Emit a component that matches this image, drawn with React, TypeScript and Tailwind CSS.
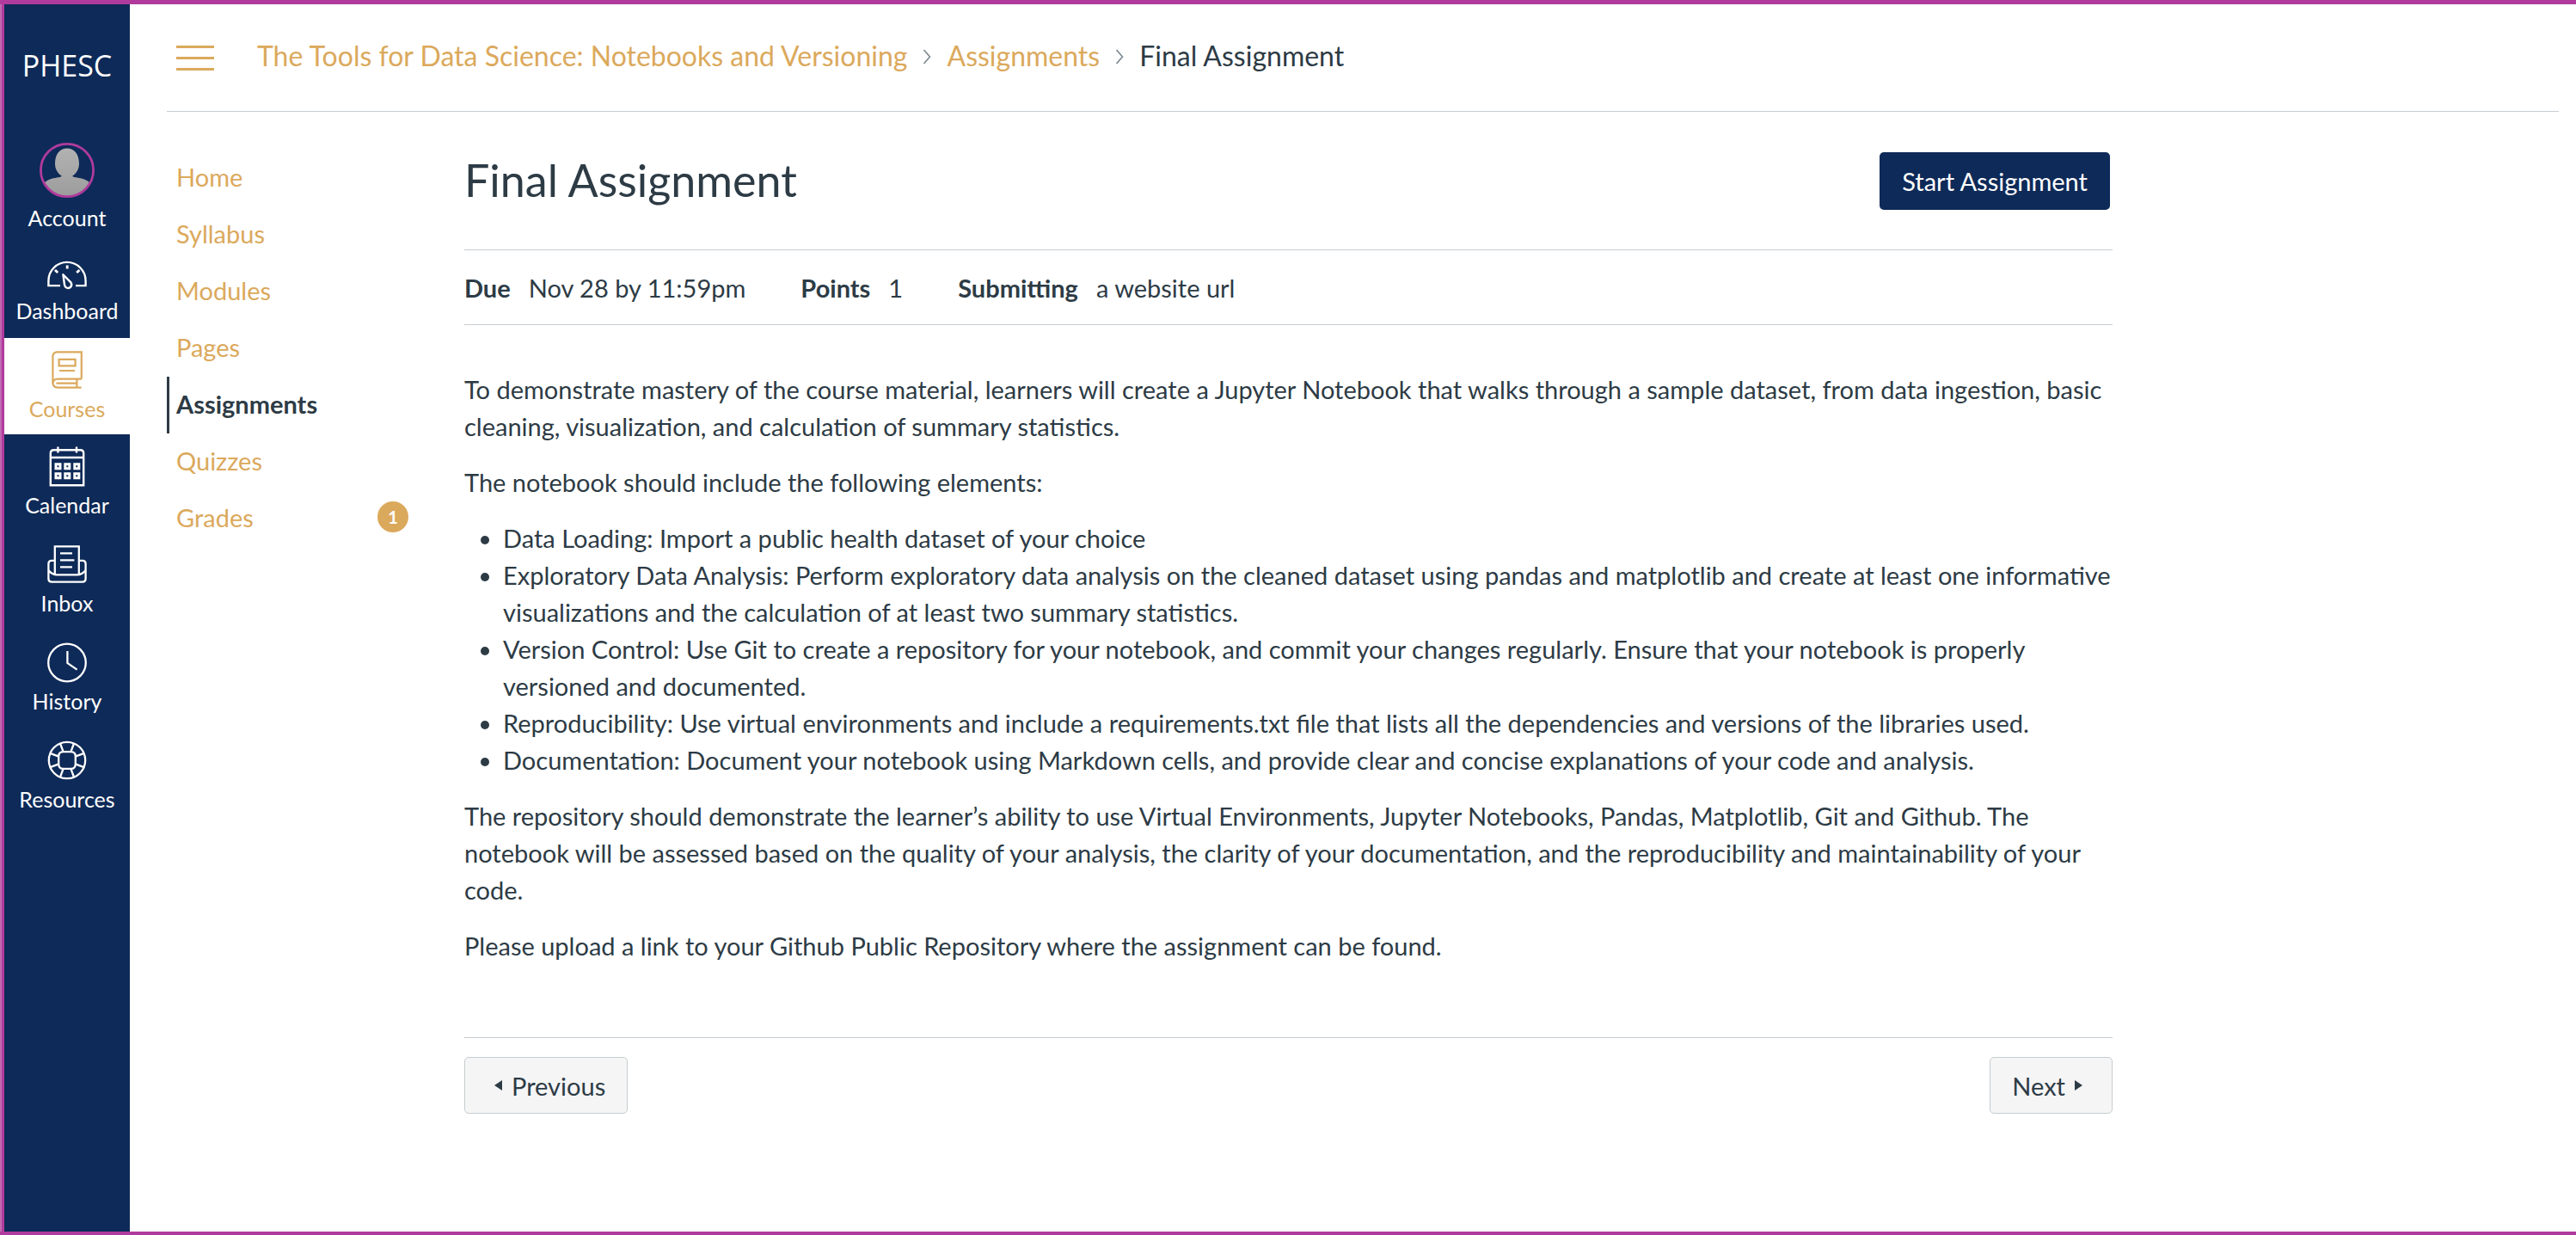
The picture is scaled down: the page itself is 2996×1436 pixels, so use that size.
import type { ReactNode } from 'react';

const Dashboard = () => (
  <svg viewBox="0 0 46 46" className="h-[46px] w-[46px]" fill="none" stroke="currentColor" strokeWidth="2.4">
    <g transform="translate(0 10.5)">
      <path d="M15 28.6H1.4V23A21.6 21.6 0 0 1 44.6 23V28.6H33" />
      <path strokeWidth="2.8" d="M23.2 5v4M9 10.4l3.2 3.2M37.4 10.4l-3.2 3.2" />
      <path d="M18.4 15.8L27.4 24.8Q29.4 28 26.8 30.6Q24 32.6 21.4 30.4Q20.2 29.4 20 27.4Z" strokeLinejoin="round" />
    </g>
  </svg>
);

const Courses = () => (
  <svg viewBox="0 0 36 44" className="h-[44px] w-[36px]" fill="none" stroke="currentColor" strokeWidth="2.2">
    <path d="M34.8 32.6V1.4H6.4Q1.6 1.6 1.4 6.4V37.4Q1.8 42.4 7 42.6H34.6" />
    <path d="M34.8 32.6H7Q1.8 32.8 1.4 37.4" />
    <path d="M8.6 9.8h19v7.6h-19zM9 23h18M5.4 37.6h23M29.4 32.6v10" />
  </svg>
);

const Calendar = () => (
  <svg viewBox="0 0 42 47" className="h-[47px] w-[42px]" fill="none" stroke="currentColor" strokeWidth="2.4">
    <path d="M1.8 45.2V8Q1.8 4.2 5.6 4.2H36.4Q40.2 4.2 40.2 8V45.2Z" />
    <path d="M10.4 0.6v7M32 0.6v7M1.8 13h38.4" />
    <path
      strokeWidth="3"
      d="M8 20.8h5v5H8zM18.8 20.8h5v5h-5zM29.8 20.8h5v5h-5zM8 31.8h5v5H8zM18.8 31.8h5v5h-5zM29.8 31.8h5v5h-5z"
    />
  </svg>
);

const Inbox = () => (
  <svg viewBox="0 0 46 44" className="h-[44px] w-[46px]" fill="none" stroke="currentColor" strokeWidth="2.3">
    <path d="M8.8 34V1.4h28V34" />
    <path d="M8.8 17.8H5Q1.4 17.8 1.4 21.4V39Q1.4 42.6 5 42.6H41Q44.6 42.6 44.6 39V21.4Q44.6 17.8 41 17.8H36.8" />
    <path d="M1.4 29.4Q6.4 34.4 11 34.4H35Q39.6 34.4 44.6 29.4" />
    <path d="M15 9.4h14M15 17.4h16.4M15 25.4h14" />
  </svg>
);

const History = () => (
  <svg viewBox="0 0 46 47" className="h-[47px] w-[46px]" fill="none" stroke="currentColor" strokeWidth="2.3">
    <circle cx="23" cy="23.5" r="21.8" />
    <path d="M23.4 10v14l11.2 7.6" />
  </svg>
);

const Resources = () => (
  <svg viewBox="0 0 46 46" className="h-[46px] w-[46px]" fill="none" stroke="currentColor" strokeWidth="2.3">
    <circle cx="23" cy="23" r="21.2" />
    <path d="M18.6 13.2h8.8q5.4 0 5.4 5.4v8.8q0 5.4-5.4 5.4h-8.8q-5.4 0-5.4-5.4v-8.8q0-5.4 5.4-5.4Z" />
    <path d="M15.2 4l3.4 9.2M30.8 4l-3.4 9.2M15.2 42l3.4-9.2M30.8 42l-3.4-9.2M4 15.2l9.4 3.4M4 30.8l9.4-3.4M42 15.2l-9.4 3.4M42 30.8l-9.4-3.4" />
  </svg>
);

const Avatar = () => (
  <svg viewBox="0 0 64 64" className="h-16 w-16">
    <defs>
      <linearGradient id="person" x1="0" y1="0" x2="0" y2="1">
        <stop offset="0" stopColor="#b2b2b2" />
        <stop offset="1" stopColor="#9c9c9c" />
      </linearGradient>
      <clipPath id="face">
        <circle cx="32" cy="32" r="30" />
      </clipPath>
    </defs>
    <g clipPath="url(#face)">
      <path
        fill="url(#person)"
        d="M32 6.4C40.4 6.4 46 13 46 24C46 30.6 43 35.6 38.4 38.4C38.4 40 42 40 48 41.2C55 43 59 46 61 50V64H3V50C5 46 9 43 16 41.2C22 40 25.6 40 25.6 38.4C21 35.6 18 30.6 18 24C18 13 23.6 6.4 32 6.4Z"
      />
    </g>
    <circle cx="32" cy="32" r="30.6" fill="none" stroke="#b03b9d" strokeWidth="2.8" />
  </svg>
);

const Chevron = () => (
  <svg viewBox="0 0 10 18" className="mt-1 h-[18px] w-[10px]" fill="none" stroke="#7b868e" strokeWidth="1.6" aria-hidden="true">
    <path d="M1.5 1l7 8-7 8" />
  </svg>
);

const globalItems: { label: string; icon: ReactNode; active?: boolean }[] = [
  { label: 'Dashboard', icon: <Dashboard /> },
  { label: 'Courses', icon: <Courses />, active: true },
  { label: 'Calendar', icon: <Calendar /> },
  { label: 'Inbox', icon: <Inbox /> },
  { label: 'History', icon: <History /> },
  { label: 'Resources', icon: <Resources /> },
];

const courseItems: { label: string; active?: boolean; badge?: number }[] = [
  { label: 'Home' },
  { label: 'Syllabus' },
  { label: 'Modules' },
  { label: 'Pages' },
  { label: 'Assignments', active: true },
  { label: 'Quizzes' },
  { label: 'Grades', badge: 1 },
];

const facts = [
  ['Due', 'Nov 28 by 11:59pm'],
  ['Points', '1'],
  ['Submitting', 'a website url'],
];

const elements = [
  'Data Loading: Import a public health dataset of your choice',
  'Exploratory Data Analysis: Perform exploratory data analysis on the cleaned dataset using pandas and matplotlib and create at least one informative visualizations and the calculation of at least two summary statistics.',
  'Version Control: Use Git to create a repository for your notebook, and commit your changes regularly. Ensure that your notebook is properly versioned and documented.',
  'Reproducibility: Use virtual environments and include a requirements.txt file that lists all the dependencies and versions of the libraries used.',
  'Documentation: Document your notebook using Markdown cells, and provide clear and concise explanations of your code and analysis.',
];

function GlobalNav() {
  return (
    <nav aria-label="Global" className="flex w-[146px] shrink-0 flex-col bg-[#0e2a58] text-[25px] leading-[30px] text-white">
      <a href="#home" className="mt-[47px] text-center font-['Open_Sans',sans-serif] text-[34px] leading-[48px]">
        PHESC
      </a>
      <a href="#account" className="mt-[66px] flex h-[102px] flex-col items-center justify-between">
        <Avatar />
        Account
      </a>
      <div className="mt-[11px] flex flex-col">
        {globalItems.map((item) => (
          <a
            key={item.label}
            href={`#${item.label.toLowerCase()}`}
            aria-current={item.active ? 'page' : undefined}
            className={
              item.active
                ? 'flex h-28 flex-col items-center bg-white pt-[7px] text-[#dba95c]'
                : 'flex h-[114px] flex-col items-center pt-[7px]'
            }
          >
            <span className="flex h-[60px] items-center">{item.icon}</span>
            {item.label}
          </a>
        ))}
      </div>
    </nav>
  );
}

function CourseNav() {
  return (
    <nav aria-label="Course" className="w-[281px] shrink-0 pt-11">
      <ul>
        {courseItems.map((item) => (
          <li key={item.label}>
            <a
              href={`#${item.label.toLowerCase()}`}
              aria-current={item.active ? 'page' : undefined}
              className={
                item.active
                  ? 'flex h-[66px] items-center border-l-[3px] border-[#2d3b45] pb-1 pl-2 font-bold'
                  : 'flex h-[66px] items-center justify-between border-l-[3px] border-transparent pb-1 pl-2 text-[#dba95c]'
              }
            >
              {item.label}
              {item.badge && (
                <span className="flex h-9 w-9 items-center justify-center rounded-full bg-[#dba95c] text-[20px] font-bold text-white">
                  {item.badge}
                </span>
              )}
            </a>
          </li>
        ))}
      </ul>
    </nav>
  );
}

export default function App() {
  return (
    <div className="flex min-h-screen border-t-[5px] border-b-4 border-[#b03b9d] bg-white font-[Lato,sans-serif] text-[29px] leading-[43px] text-[#2d3b45]">
      <div className="w-[5px] shrink-0 border-l-2 border-[#c069b4] bg-[#b03b9d]" />
      <GlobalNav />
      <div className="flex min-w-0 flex-1 flex-col pr-5 pl-[43px]">
        <header className="flex h-[125px] items-center border-b border-[#c7cdd1] pl-[11px]">
          <button type="button" aria-label="Toggle course navigation" className="flex w-11 flex-col gap-[10px]">
            <span className="h-[3px] bg-[#dba95c]" />
            <span className="h-[3px] bg-[#dba95c]" />
            <span className="h-[3px] bg-[#dba95c]" />
          </button>
          <nav aria-label="Breadcrumb" className="ml-[50px] flex items-center gap-[18px] pb-[6px] text-[32px]">
            <a href="#course" className="text-[#dba95c]">
              The Tools for Data Science: Notebooks and Versioning
            </a>
            <Chevron />
            <a href="#assignments" className="text-[#dba95c]">
              Assignments
            </a>
            <Chevron />
            <span>Final Assignment</span>
          </nav>
        </header>
        <div className="flex">
          <CourseNav />
          <main className="mr-[519px] ml-[65px] min-w-0 flex-1">
            <div className="flex h-[160px] items-center justify-between pr-[3px]">
              <h1 className="pb-[2px] text-[52px] leading-[64px]">Final Assignment</h1>
              <button type="button" className="h-[67px] rounded-[5px] bg-[#0e2a58] px-[26px] text-white">
                Start Assignment
              </button>
            </div>
            <dl className="flex h-[88px] items-center gap-16 border-y border-[#c7cdd1]">
              {facts.map(([term, value]) => (
                <div key={term} className="flex gap-[21px]">
                  <dt className="font-bold">{term}</dt>
                  <dd>{value}</dd>
                </div>
              ))}
            </dl>
            <div className="mt-[53px] flex flex-col gap-[22px]">
              <p>
                To demonstrate mastery of the course material, learners will create a Jupyter Notebook that walks through
                a sample dataset, from data ingestion, basic cleaning, visualization, and calculation of summary
                statistics.
              </p>
              <p>The notebook should include the following elements:</p>
              <ul className="list-disc pl-[45px]">
                {elements.map((text) => (
                  <li key={text}>{text}</li>
                ))}
              </ul>
              <p>
                The repository should demonstrate the learner’s ability to use Virtual Environments, Jupyter Notebooks,
                Pandas, Matplotlib, Git and Github. The notebook will be assessed based on the quality of your analysis,
                the clarity of your documentation, and the reproducibility and maintainability of your code.
              </p>
              <p>Please upload a link to your Github Public Repository where the assignment can be found.</p>
            </div>
            <div className="mt-[85px] flex justify-between border-t border-[#c7cdd1] pt-[22px]">
              <button
                type="button"
                className="flex h-[66px] items-center gap-[11px] rounded-[5px] border border-[#c7cdd1] bg-[#f5f5f5] pr-[25px] pl-[34px]"
              >
                <svg viewBox="0 0 9 12" className="h-3 w-[9px]" fill="currentColor" aria-hidden="true">
                  <path d="M9 0v12L0 6z" />
                </svg>
                Previous
              </button>
              <button
                type="button"
                className="flex h-[66px] items-center gap-[11px] rounded-[5px] border border-[#c7cdd1] bg-[#f5f5f5] pr-[34px] pl-[25px]"
              >
                Next
                <svg viewBox="0 0 9 12" className="h-3 w-[9px]" fill="currentColor" aria-hidden="true">
                  <path d="M0 0v12l9-6z" />
                </svg>
              </button>
            </div>
          </main>
        </div>
      </div>
    </div>
  );
}
